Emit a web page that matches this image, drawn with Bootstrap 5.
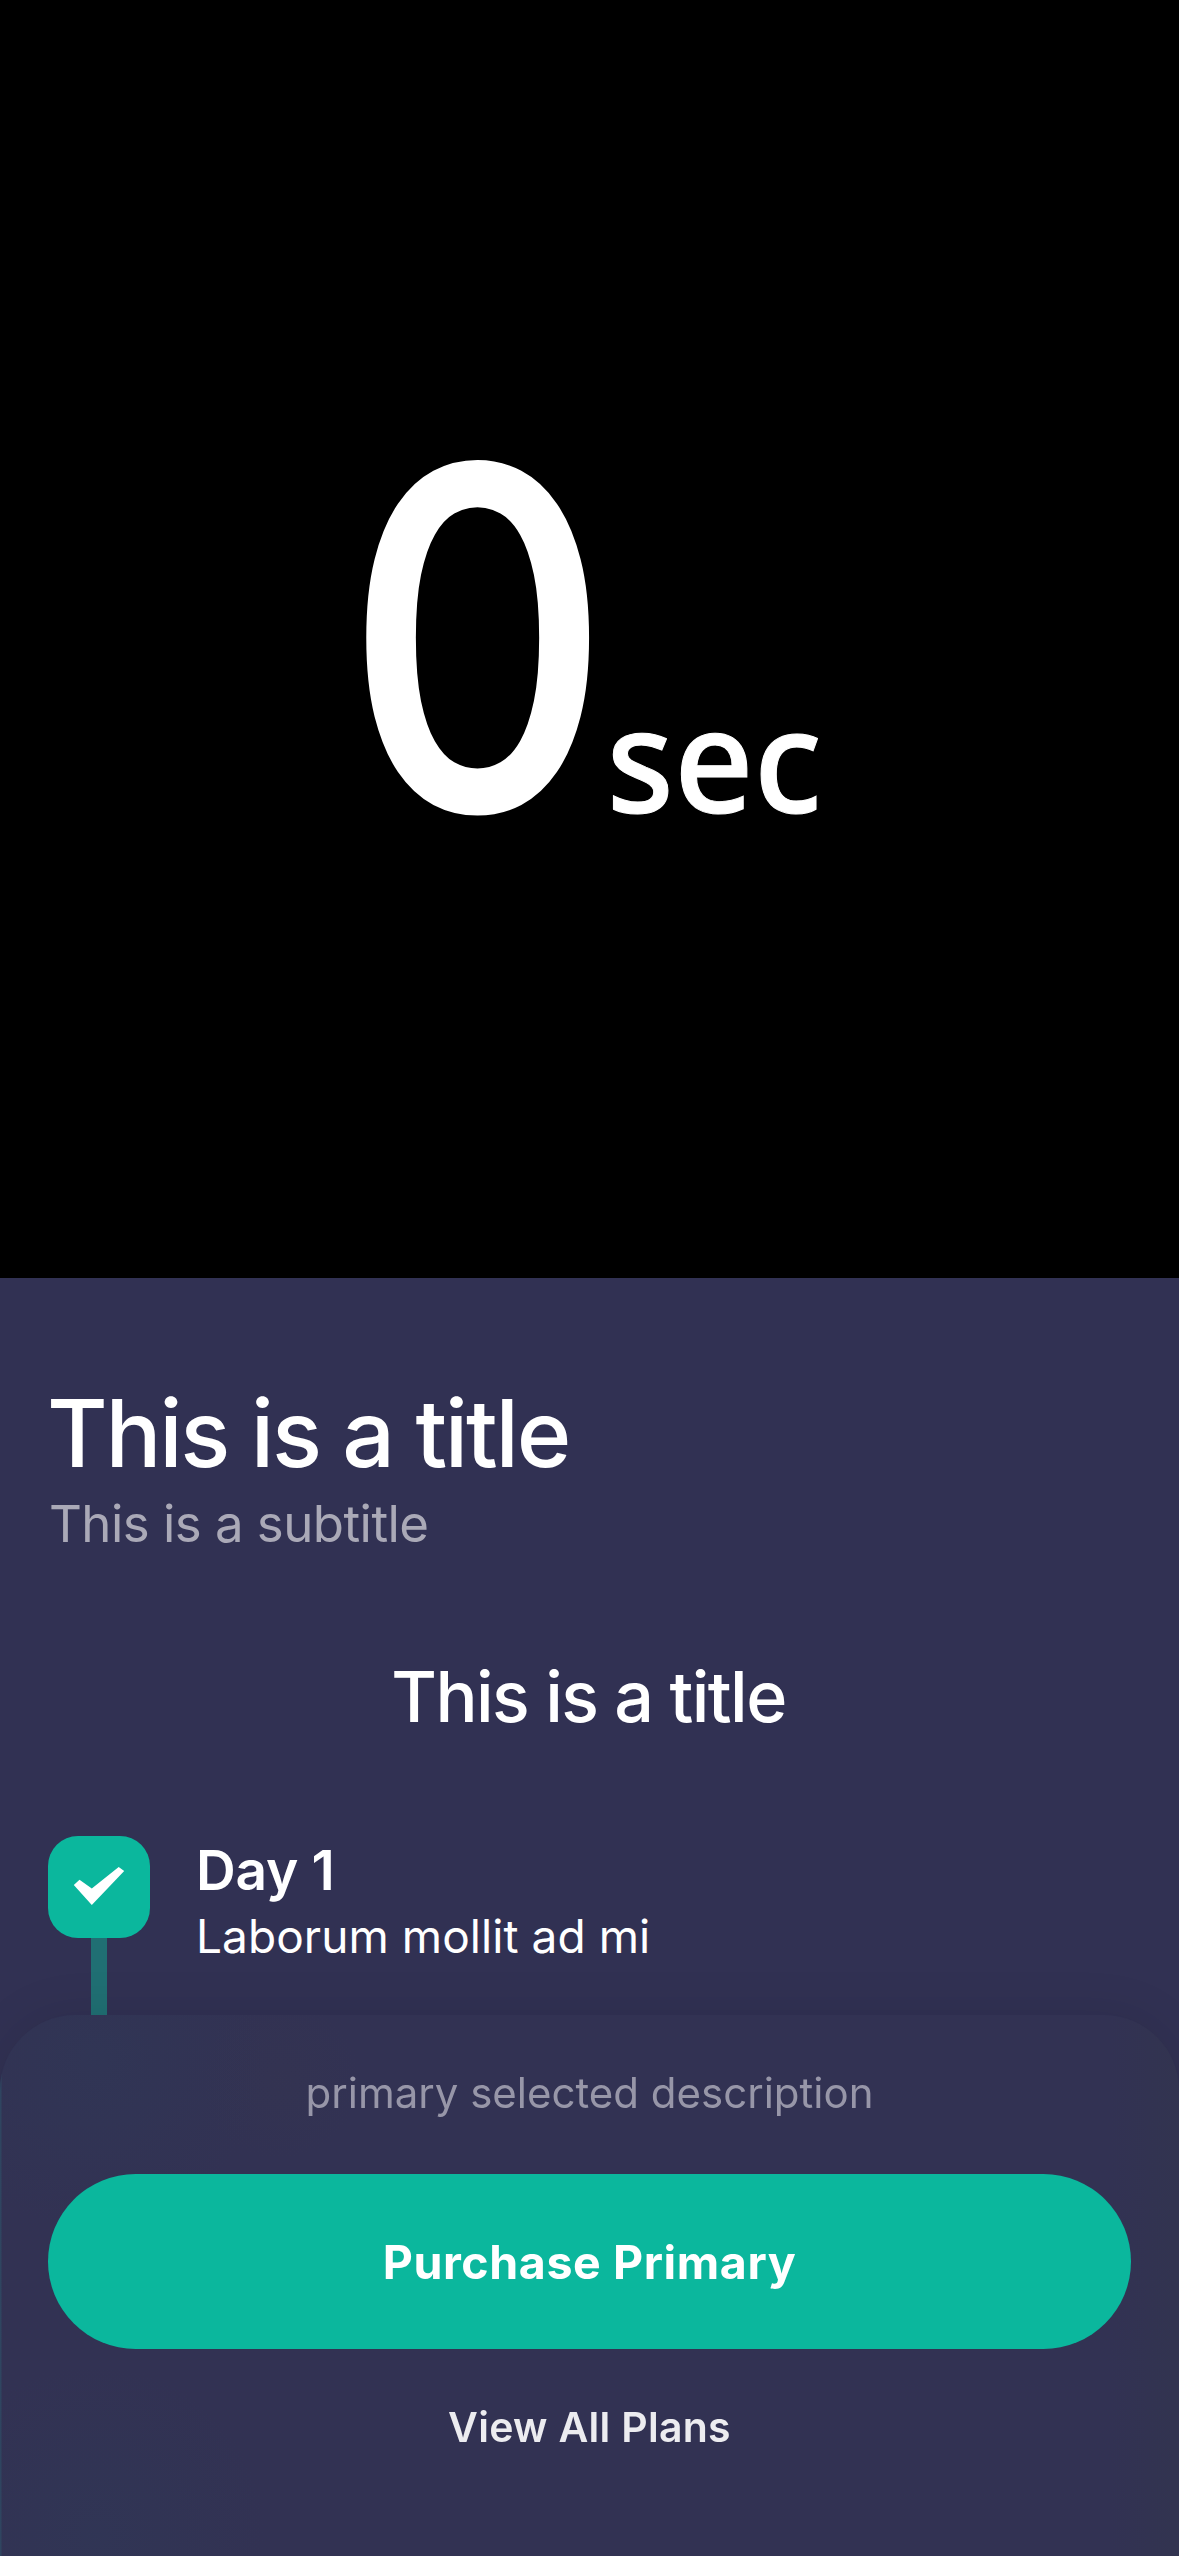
<!DOCTYPE html>
<html lang="en">
<head>
<meta charset="utf-8">
<meta name="viewport" content="width=device-width, initial-scale=1">
<title>Paywall</title>
<link href="https://cdn.jsdelivr.net/npm/bootstrap@5.3.0/dist/css/bootstrap.min.css" rel="stylesheet">
<style>
  :root { --bs-body-bg: #313153; --bs-body-font-family: Inter, "Noto Sans", sans-serif; --accent: #0bb79d; }
  html, body { height: 100%; }
  .video-hero { height: 1278px; }
  .video-hero svg { width: 100%; height: 100%; }
  .page-x { padding-left: 48px; padding-right: 48px; }
  .hero-title { font-size: 93px; font-weight: 500; line-height: 112px; letter-spacing: -2.25px; padding-top: 99px; margin: 0 0 0 -1px; }
  .hero-sub { font-size: 51px; line-height: 62px; letter-spacing: -.55px; margin: 4px 0 0 1px; color: #aaa9b7; }
  .section-title { font-size: 70px; font-weight: 500; line-height: 84px; letter-spacing: -1.6px; margin: 100px 2px 97px 0; }
  .step-rail { width: 102px; }
  .step-icon { width: 102px; height: 102px; border-radius: 30px; background: var(--accent); }
  .step-icon svg { width: 102px; height: 102px; }
  .step-line { width: 16px; height: 120px; background: #206f73; }
  .step-body { padding-left: 46px; }
  .step-name { font-size: 55px; line-height: 66px; letter-spacing: -.25px; padding-top: 1px; }
  .step-text { font-size: 46px; line-height: 56px; letter-spacing: .06px; margin-top: 5px; }
  .sheet { height: 541px; padding-top: 53px; border-radius: 75px 75px 0 0;
    background:
      linear-gradient(90deg, #2f4560 0 1px, transparent 2px),
      radial-gradient(circle at 95px 45px, rgba(46,58,88,.4), transparent 170px),
      radial-gradient(circle at 280px 65px, rgba(54,54,78,.3), transparent 80px),
      radial-gradient(circle at 95px 520px, rgba(46,58,88,.4), transparent 170px),
      linear-gradient(90deg, transparent 1110px, rgba(50,53,78,.6) 1179px),
      #323253;
    box-shadow: 0 0 50px rgba(0,0,0,.1); }
  .sheet-note { font-size: 42px; line-height: 50px; color: #9796a8; }
  .buy-btn { --bs-btn-bg: var(--accent); --bs-btn-color: #fff; --bs-btn-hover-bg: #0aa68e; --bs-btn-hover-color: #fff;
    height: 175px; margin-top: 56px; padding-top: 8px; border: 0; font-size: 46.5px; letter-spacing: .6px; }
  .plans-link { font-size: 41px; line-height: 50px; letter-spacing: .28px; margin-top: 53px; color: #ececf0; }
</style>
<script src="https://cdn.jsdelivr.net/npm/bootstrap@5.3.0/dist/js/bootstrap.bundle.min.js"></script>
</head>
<body class="text-white overflow-hidden">
  <section class="video-hero bg-black">
    <svg class="d-block" viewBox="0 0 1179 1278" fill="#fff">
      <text transform="translate(356.5 810) scale(.874 1)" font-family="Lato" font-weight="600" font-size="478" stroke="#fff" stroke-width="4">0</text>
      <text transform="translate(606.5 813) scale(.972 1)" font-family="Noto Sans" font-weight="500" font-size="143" stroke="#fff" stroke-width="1">sec</text>
    </svg>
  </section>

  <main class="page-x">
    <h1 class="hero-title">This is a title</h1>
    <p class="hero-sub">This is a subtitle</p>
    <h2 class="section-title text-center">This is a title</h2>

    <div class="d-flex align-items-start">
      <div class="step-rail d-flex flex-column align-items-center flex-shrink-0">
        <div class="step-icon">
          <svg class="d-block" viewBox="0 0 102 102" fill="#fff"><path d="M25.8 49 31.5 43.8 43.8 52.5 70.7 31l5.5 4L43.8 69z"/></svg>
        </div>
        <div class="step-line"></div>
      </div>
      <div class="step-body">
        <div class="step-name fw-semibold">Day 1</div>
        <div class="step-text">Laborum mollit ad mi</div>
      </div>
    </div>
  </main>

  <aside class="sheet page-x fixed-bottom d-flex flex-column align-items-stretch text-center">
    <div class="sheet-note">primary selected description</div>
    <button type="button" class="btn buy-btn rounded-pill w-100 fw-bold">Purchase Primary</button>
    <a href="#" class="plans-link fw-semibold text-decoration-none">View All Plans</a>
  </aside>
</body>
</html>
